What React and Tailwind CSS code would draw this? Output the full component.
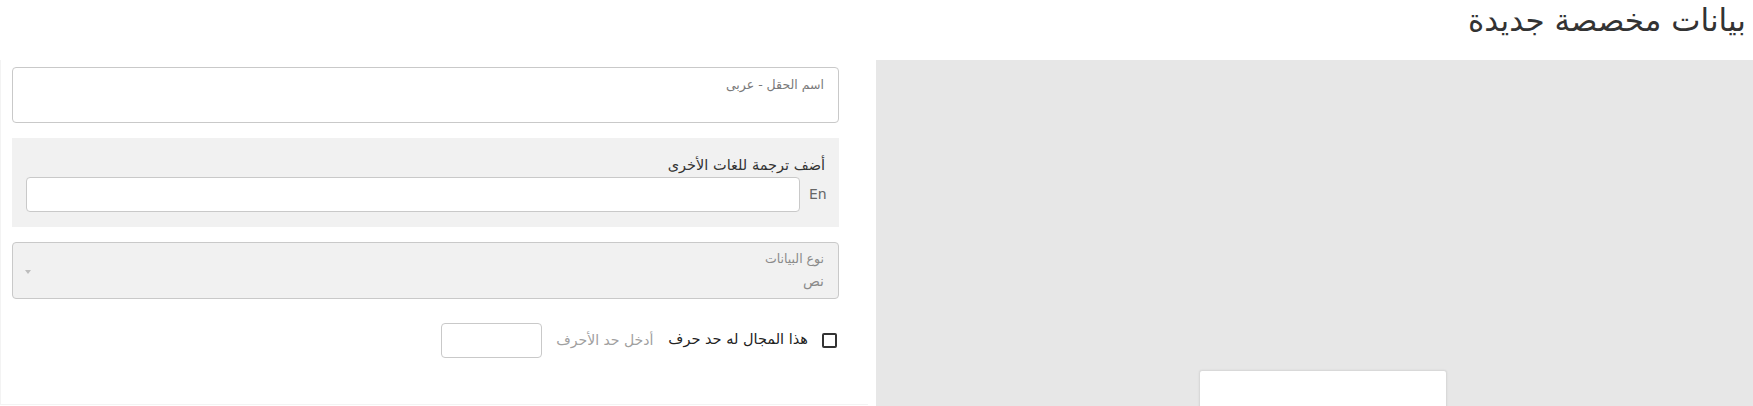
import React from 'react';

const FONT = "font-['DejaVu_Sans',sans-serif]";

function FloatingField({ label, value, disabled }) {
  return (
    <div
      className={`relative h-[57px] rounded-[4px] border border-[#c9c9c9] pl-3 pr-[14px] pt-[6px] ${
        disabled ? 'bg-[#f1f1f1]' : 'bg-white'
      }`}
    >
      <div className="text-[12.5px] leading-[20px] text-[#8a8a8a]">{label}</div>
      {value && <div className="mt-[2px] text-[14px] leading-[20px] text-[#8a8a8a]">{value}</div>}
      {disabled && (
        <span className="absolute left-[12px] top-[27px] h-0 w-0 border-x-[3px] border-t-[4px] border-x-transparent border-t-[#bdbdbd]" />
      )}
    </div>
  );
}

export default function App() {
  return (
    <div dir="rtl" className={`min-h-[406px] bg-white text-[#333] ${FONT}`}>
      <h1 className="h-[60px] pr-[7px] pt-0 text-[31px] font-normal leading-[40px] text-[#333]">
        بيانات مخصصة جديدة
      </h1>

      <div className="flex gap-2">
        {/* preview area */}
        <div dir="ltr" className="h-[360px] w-[877px] shrink-0 bg-[#e7e7e7] pt-[310px]">
          <div className="ml-[323px] h-[80px] w-[248px] rounded-[3px] border border-[#d9d9d9] bg-white shadow-[0_0_2px_rgba(0,0,0,0.08)]" />
        </div>

        {/* form */}
        <div className="flex h-[345px] w-[868px] shrink-0 flex-col gap-[15px] border-b border-l border-[#f3f3f3] pl-[11px] pr-[29px] pt-[7px]">
          <div className="h-[56px] rounded-[4px] border border-[#c9c9c9] bg-white pl-3 pr-[14px] pt-[7px]">
            <div className="text-[12.5px] leading-[20px] text-[#7a7a7a]">اسم الحقل - عربى</div>
          </div>

          <div className="flex h-[89px] flex-col bg-[#f1f1f1] pl-[14px] pr-[14px] pt-[17px]">
            <div className="text-[14.5px] leading-[20px] text-[#333]">أضف ترجمة للغات الأخرى</div>
            <div className="mt-[2px] flex items-center gap-[9px]">
              <span dir="ltr" className="w-[16px] text-[14px] text-[#666]">
                En
              </span>
              <input className="h-[35px] flex-1 rounded-[4px] border border-[#c9c9c9] bg-white px-2 outline-none" />
            </div>
          </div>

          <FloatingField label="نوع البيانات" value="نص" disabled />

          <div className="flex h-[52px] items-center pr-[2px]">
            <div className="flex items-center">
              <span className="ml-[14px] h-[15px] w-[15px] rounded-[2px] border-2 border-[#333]" />
              <span className="text-[14.5px] text-[#222]">هذا المجال له حد حرف</span>
              <span className="mr-[15px] text-[14px] text-[#a0a0a0]">أدخل حد الأحرف</span>
              <input className="mr-[14px] h-[35px] w-[101px] rounded-[4px] border border-[#c9c9c9] bg-white outline-none" />
            </div>
          </div>
        </div>
      </div>
    </div>
  );
}
